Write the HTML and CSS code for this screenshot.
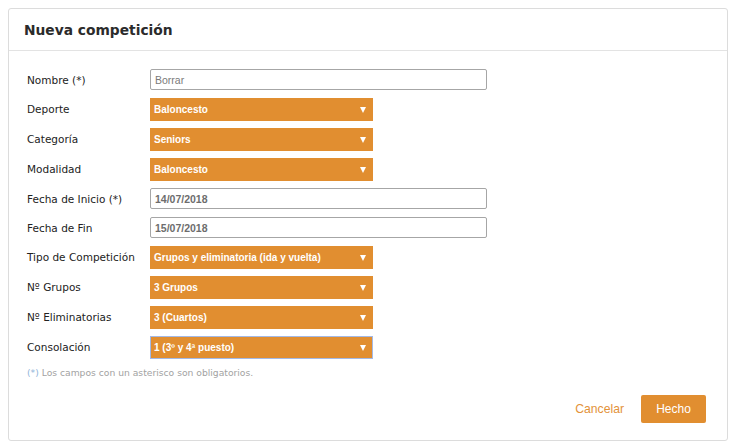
FILE: index.html
```html
<!DOCTYPE html>
<html lang="es">
<head>
<meta charset="utf-8">
<title>Nueva competición</title>
<link rel="stylesheet" href="styles.css">
</head>
<body>
<div class="card">
  <div class="card-header"><h1 class="title">Nueva competición</h1></div>
  <div class="card-body">
    <div class="row row-input"><label class="label">Nombre (*)</label><div class="input placeholder">Borrar</div></div>
    <div class="row row-select"><label class="label">Deporte</label><div class="select"><span class="select-text">Baloncesto</span><span class="arrow"></span></div></div>
    <div class="row row-select"><label class="label">Categoría</label><div class="select"><span class="select-text">Seniors</span><span class="arrow"></span></div></div>
    <div class="row row-select"><label class="label">Modalidad</label><div class="select"><span class="select-text">Baloncesto</span><span class="arrow"></span></div></div>
    <div class="row row-input"><label class="label">Fecha de Inicio (*)</label><div class="input value">14/07/2018</div></div>
    <div class="row row-input"><label class="label">Fecha de Fin</label><div class="input value">15/07/2018</div></div>
    <div class="row row-select"><label class="label">Tipo de Competición</label><div class="select"><span class="select-text">Grupos y eliminatoria (ida y vuelta)</span><span class="arrow"></span></div></div>
    <div class="row row-select"><label class="label">Nº Grupos</label><div class="select"><span class="select-text">3 Grupos</span><span class="arrow"></span></div></div>
    <div class="row row-select"><label class="label">Nº Eliminatorias</label><div class="select"><span class="select-text">3 (Cuartos)</span><span class="arrow"></span></div></div>
    <div class="row row-select"><label class="label">Consolación</label><div class="select focused"><span class="select-text">1 (3º y 4ª puesto)</span><span class="arrow"></span></div></div>
    <p class="note"><span class="note-mark">(*)</span> Los campos con un asterisco son obligatorios.</p>
    <div class="actions">
      <button class="btn-link">Cancelar</button>
      <button class="btn-primary">Hecho</button>
    </div>
  </div>
</div>
</body>
</html>
```

FILE: styles.css
```css
html, body {
  margin: 0;
  padding: 0;
  background: #ffffff;
}
body {
  padding: 8px;
  font-family: "DejaVu Sans", Verdana, sans-serif;
}
.card {
  width: 720px;
  box-sizing: border-box;
  border: 1px solid #dcdcdc;
  border-radius: 3px;
  background: #fff;
}
.card-header {
  height: 41px;
  border-bottom: 1px solid #e3e3e3;
  display: flex;
  align-items: center;
  padding-left: 15px;
}
.title {
  margin: 0;
  font-family: "DejaVu Sans", Verdana, sans-serif;
  font-weight: bold;
  font-size: 13.8px;
  color: #2b2b2b;
}
.card-body {
  padding: 14px 21px 17px 18px;
}
.row {
  display: flex;
  align-items: center;
}
.row-input { height: 29px; }
.row-select { height: 30px; }
.label {
  width: 123px;
  flex: none;
  font-size: 10.5px;
  color: #222;
}
.input {
  width: 337px;
  height: 21px;
  box-sizing: border-box;
  border: 1px solid #a6a6a6;
  border-radius: 2px;
  padding-left: 4px;
  display: flex;
  align-items: center;
  font-family: "Liberation Sans", Arial, sans-serif;
  font-size: 10.5px;
}
.input.placeholder { color: #7a7a7a; }
.input.value { color: #6d6d6d; font-weight: bold; }
.select {
  width: 223px;
  height: 23px;
  box-sizing: border-box;
  background: #e18e30;
  display: flex;
  align-items: center;
  justify-content: space-between;
  padding: 0 7px 0 4px;
}
.select.focused {
  border: 1px solid #a3b9e6;
  padding-left: 3px;
  padding-right: 6px;
}
.select-text {
  font-family: "Liberation Sans", Arial, sans-serif;
  font-weight: bold;
  font-size: 10px;
  color: #fff;
}
.arrow {
  width: 0;
  height: 0;
  border-left: 3px solid transparent;
  border-right: 3px solid transparent;
  border-top: 6px solid #fff;
  margin-top: 1px;
}
.note {
  margin: 4px 0 0 0;
  line-height: 14px;
  font-size: 9.2px;
  color: #a2a2a2;
}
.note-mark { color: #8fb3d9; }
.actions {
  display: flex;
  justify-content: flex-end;
  align-items: center;
  margin-top: 15px;
}
.btn-link {
  border: 0;
  background: none;
  padding: 0;
  margin-right: 17px;
  font-family: "Liberation Sans", Arial, sans-serif;
  font-size: 12.2px;
  color: #e3923a;
}
.btn-primary {
  width: 65px;
  height: 28px;
  border: 0;
  border-radius: 2px;
  background: #e18e30;
  color: #fff;
  font-family: "Liberation Sans", Arial, sans-serif;
  font-size: 12px;
}
```
